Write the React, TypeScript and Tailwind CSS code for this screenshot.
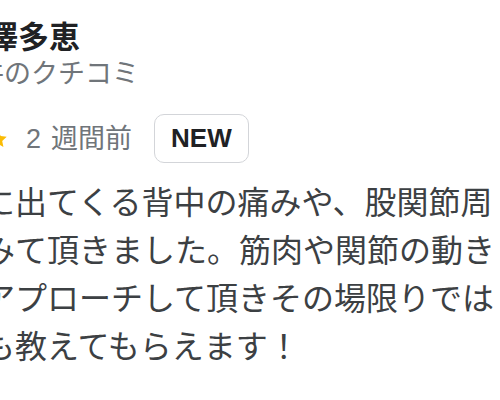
import React from "react";

const font = { fontFamily: '"Liberation Sans", "Noto Sans CJK JP", sans-serif' };

function Star() {
  return (
    <svg width="22" height="22" viewBox="0 0 24 24" className="shrink-0">
      <path
        d="M12 2.6l2.9 6.1 6.6.8-4.9 4.6 1.3 6.6L12 17.4l-5.9 3.3 1.3-6.6-4.9-4.6 6.6-.8z"
        fill="#fbbc04"
      />
    </svg>
  );
}

export default function App() {
  return (
    <div
      className="w-[500px] h-[400px] overflow-hidden bg-white"
      style={font}
    >
      <div className="-ml-[17px] pt-[20px] flex flex-col">
        <div className="ml-[4px] h-[36px] leading-[36px] text-[31px] font-bold text-[#202124] whitespace-nowrap">
          澤多恵
        </div>
        <div className="-ml-[6px] mt-[2px] h-[32px] leading-[32px] text-[27px] text-[#70757a] whitespace-nowrap">
          件のクチコミ
        </div>
        <div className="mt-[24px] h-[49px] flex items-center whitespace-nowrap">
          <div className="-ml-[84px] flex items-center mt-[1px]">
            <Star />
            <Star />
            <Star />
            <Star />
            <Star />
          </div>
          <span className="ml-[17px] text-[27px] leading-[32px] text-[#70757a]">2</span>
          <span className="ml-[10px] text-[27px] leading-[32px] text-[#70757a]">週間前</span>
          <span className="ml-[22px] h-[49px] px-[16px] flex items-center rounded-[10px] border-[1.5px] border-[#d3d5d9] text-[26px] font-bold text-[#202124]">
            NEW
          </span>
        </div>
        <div className="mt-[16px] text-[32px] leading-[48px] text-[#3c4043] whitespace-nowrap">
          <div>に出てくる背中の痛みや、股関節周</div>
          <div>みて頂きました。筋肉や関節の動き</div>
          <div>アプローチして頂きその場限りでは</div>
          <div>も教えてもらえます！</div>
        </div>
      </div>
    </div>
  );
}
